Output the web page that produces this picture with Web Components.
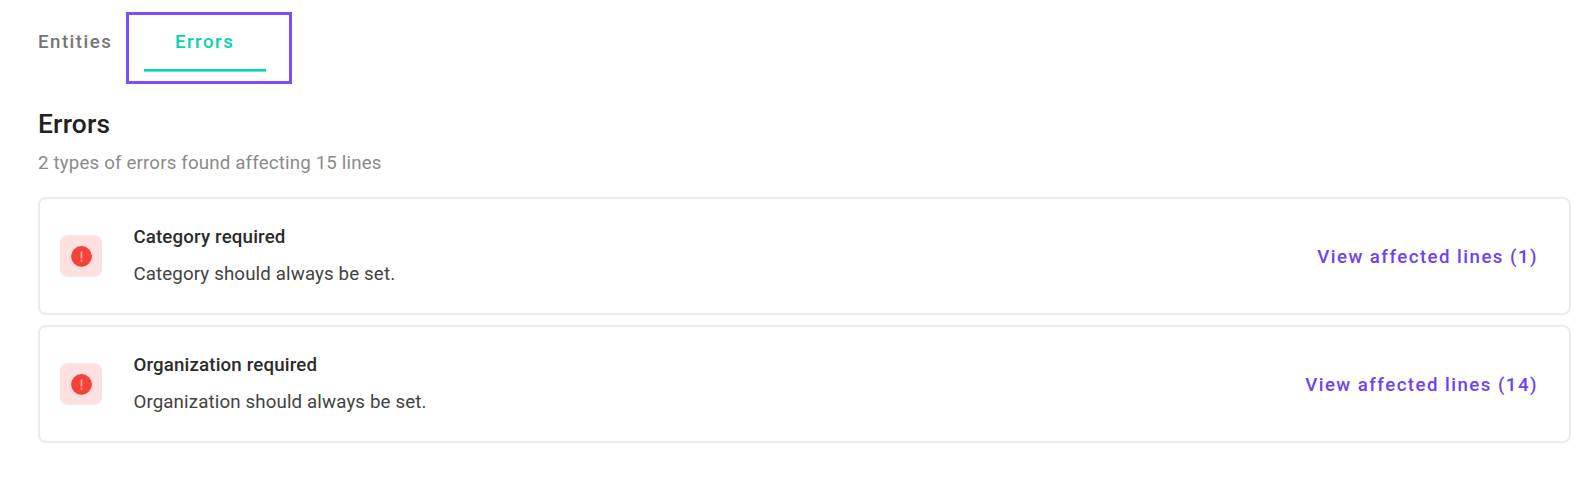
<!DOCTYPE html>
<html lang="en">
<head>
<meta charset="utf-8">
<title>Errors</title>
<style>
    body {
        margin: 0;
        background: #fff;
        font-family: Roboto, "Liberation Sans", sans-serif;
    }
</style>
</head>
<body>
<error-page>
    <tab-bar slot="tabs">
        <tab-item>Entities</tab-item>
        <tab-item active>Errors</tab-item>
    </tab-bar>
    <span slot="title">Errors</span>
    <span slot="summary">2 types of errors found affecting 15 lines</span>
    <error-card>
        <span slot="title">Category required</span>
        <span slot="message">Category should always be set.</span>
        <link-button slot="action">View affected lines (1)</link-button>
    </error-card>
    <error-card>
        <span slot="title">Organization required</span>
        <span slot="message">Organization should always be set.</span>
        <link-button slot="action">View affected lines (14)</link-button>
    </error-card>
</error-page>

<script>
/**
 * Base class that clones a template into an open shadow root.
 */
class BaseElement extends HTMLElement {
    constructor() {
        super();
        const template = document.createElement("template");
        template.innerHTML = this.constructor.markup;
        this.attachShadow({mode: "open"});
        this.shadowRoot.appendChild(template.content.cloneNode(true));
    }
}

/**
 * The page: tabs on top, then the heading and the list of cards.
 */
class ErrorPage extends BaseElement {
    static get markup() {
        return `
            <style>
                :host {
                    display: block;
                    padding: 12px 25px 0 38px;
                }

                h1 {
                    margin: 24px 0 0;
                    font-size: 26.4px;
                    font-weight: 500;
                    line-height: 32px;
                    letter-spacing: 0.2px;
                    color: #212121;
                }

                p {
                    margin: 11px 0 0;
                    font-size: 18.7px;
                    line-height: 24px;
                    letter-spacing: 0.17px;
                    color: #8a8a8a;
                }

                .list {
                    display: flex;
                    flex-direction: column;
                    gap: 10px;
                    margin-top: 22px;
                }
            </style>
            <slot name="tabs"></slot>
            <h1><slot name="title"></slot></h1>
            <p><slot name="summary"></slot></p>
            <div class="list"><slot></slot></div>
        `;
    }
}

class TabBar extends BaseElement {
    static get markup() {
        return `
            <style>
                :host {
                    display: flex;
                    height: 72px;
                }
            </style>
            <slot></slot>
        `;
    }
}

/**
 * One tab. The active one has an underline and a frame around it.
 */
class TabItem extends BaseElement {
    static get markup() {
        return `
            <style>
                :host {
                    display: block;
                    box-sizing: border-box;
                    width: 88px;
                    padding-top: 18px;
                    font-size: 18.7px;
                    font-weight: 500;
                    line-height: 24px;
                    letter-spacing: 1.48px;
                    white-space: nowrap;
                    color: #757575;
                }

                :host([active]) {
                    width: 166px;
                    padding: 15px 23px 0 15px;
                    border: 3px solid #7c4dff;
                    color: #00d4b0;
                }

                :host([active]) .label {
                    padding: 0 0 15px 31px;
                    border-bottom: 2px solid #00d4b0;
                    box-shadow: 0 1px #66e5d0;
                }
            </style>
            <div class="label"><slot></slot></div>
        `;
    }
}

/**
 * Card with an error icon, two lines of text and an action on the right.
 */
class ErrorCard extends BaseElement {
    static get markup() {
        return `
            <style>
                :host {
                    display: flex;
                    align-items: center;
                    box-sizing: border-box;
                    height: 118px;
                    padding: 0 31px 0 20px;
                    border: 2px solid #ebebeb;
                    border-radius: 8px;
                }

                .icon {
                    display: flex;
                    align-items: center;
                    justify-content: center;
                    width: 42px;
                    height: 42px;
                    border-radius: 8px;
                    background: #ffe0e0;
                }

                .text {
                    flex: 1;
                    margin-left: 31.4px;
                    padding-bottom: 2px;
                    font-size: 18.7px;
                    line-height: 24px;
                }

                .title {
                    font-weight: 500;
                    letter-spacing: 0.16px;
                    color: #2b2b2b;
                }

                .message {
                    margin-top: 13px;
                    letter-spacing: 0.14px;
                    color: #424242;
                }
            </style>
            <div class="icon">
                <svg width="21" height="21" viewBox="0 0 21 21">
                    <circle cx="10.5" cy="10.5" r="10.4" fill="#f44336"/>
                    <path d="M10.5 5.2v7M10.5 13.8v1.9" stroke="#ffa49d" stroke-width="1.7"/>
                </svg>
            </div>
            <div class="text">
                <div class="title"><slot name="title"></slot></div>
                <div class="message"><slot name="message"></slot></div>
            </div>
            <slot name="action"></slot>
        `;
    }
}

class LinkButton extends BaseElement {
    static get markup() {
        return `
            <style>
                :host {
                    display: flex;
                    padding-top: 2px;
                }

                button {
                    padding: 0;
                    border: none;
                    background: none;
                    font: 500 18.7px/24px Roboto, "Liberation Sans", sans-serif;
                    letter-spacing: 1.45px;
                    color: #6f3ff5;
                    cursor: pointer;
                }
            </style>
            <button><slot></slot></button>
        `;
    }
}

customElements.define("error-page", ErrorPage);
customElements.define("tab-bar", TabBar);
customElements.define("tab-item", TabItem);
customElements.define("error-card", ErrorCard);
customElements.define("link-button", LinkButton);
</script>
</body>
</html>
